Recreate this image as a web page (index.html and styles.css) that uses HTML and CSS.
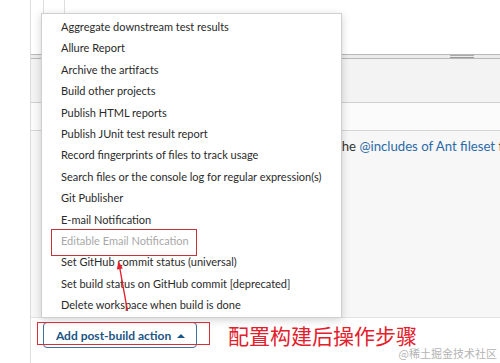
FILE: index.html
```html
<!DOCTYPE html>
<html lang="en">
<head>
    <meta charset="UTF-8">
    <meta name="viewport" content="width=device-width, initial-scale=1.0">
    <title>Post-build Actions</title>
    <link rel="stylesheet" href="styles.css">
</head>
<body>
    <div class="page">
        <div class="top">
            <div class="tab"></div>
        </div>
        <div class="splitter"><span class="handle"></span></div>
        <div class="section-a"></div>
        <div class="section-b"></div>
        <div class="help">
            <p class="help-text">the <a href="#">@includes of Ant fileset</a> for the exact format.</p>
        </div>
        <div class="actions">
            <button class="add-btn">Add post-build action <span class="caret"></span></button>
            <span class="note">配置构建后操作步骤</span>
        </div>
    </div>

    <ul class="menu">
        <li>Aggregate downstream test results</li>
        <li>Allure Report</li>
        <li>Archive the artifacts</li>
        <li>Build other projects</li>
        <li>Publish HTML reports</li>
        <li>Publish JUnit test result report</li>
        <li>Record fingerprints of files to track usage</li>
        <li>Search files or the console log for regular expression(s)</li>
        <li>Git Publisher</li>
        <li>E-mail Notification</li>
        <li class="disabled">Editable Email Notification</li>
        <li>Set GitHub commit status (universal)</li>
        <li>Set build status on GitHub commit [deprecated]</li>
        <li>Delete workspace when build is done</li>
    </ul>

    <!-- annotations drawn on top of the screenshot -->
    <div class="mark mark-item"></div>
    <div class="mark mark-btn"></div>
    <svg class="arrow" width="500" height="363" viewBox="0 0 500 363">
        <line x1="127.5" y1="311" x2="119.6" y2="267" stroke="#e3202c" stroke-width="1.4"/>
        <polygon points="118.5,261 122.8,268.4 116.8,269.4" fill="#e3202c"/>
    </svg>
    <div class="watermark">@稀土掘金技术社区</div>
</body>
</html>
```

FILE: styles.css
```css
body {
    margin: 0;
    height: 363px;
    overflow: hidden;
    background: #fff;
    font-family: Lato, "Open Sans", Arial, sans-serif;
    color: #333;
}
.page {
    margin-left: 30px;
    height: 363px;
    border-left: 1px solid #dcdcdc;
    display: flex;
    flex-direction: column;
}
.top {
    height: 54px;
}
.tab {
    margin-left: 12px;
    width: 20px;
    height: 13px;
    border-left: 1px solid #dedede;
    border-right: 1px solid #dedede;
}
.splitter {
    height: 3px;
    border-top: 1px solid #b8b8b8;
    border-bottom: 1px solid #b8b8b8;
    background: #ececec;
    display: flex;
    justify-content: flex-end;
    padding-right: 26px;
}
.handle {
    width: 24px;
    height: 1px;
    border-bottom: 1px solid #999;
    border-top: 1px solid #aaa;
}
.section-a {
    height: 43px;
    background: #f3f3f3;
    border-bottom: 1px solid #cfcfcf;
}
.section-b {
    height: 27px;
    background: #fbfbfb;
    border-bottom: 1px solid #d4d4d4;
}
.help {
    height: 186px;
    background: #f7f7f7;
    border-bottom: 1px solid #e2e2e2;
    overflow: hidden;
}
.help-text {
    margin: 0;
    padding: 6px 0 0 306px;
    font-size: 13.2px;
    line-height: 18px;
    white-space: nowrap;
    color: #333;
}
.help-text a {
    color: #2b6aa8;
    text-decoration: none;
}
.actions {
    display: flex;
    align-items: center;
    padding: 4px 0 0 12px;
}
.add-btn {
    width: 154px;
    height: 26px;
    border: 1px solid #3f6f97;
    border-radius: 4px;
    background: #fff;
    color: #1b5585;
    font-family: Lato, "Open Sans", Arial, sans-serif;
    font-size: 12px;
    font-weight: bold;
    padding: 0 0 0 1px;
}
.caret {
    display: inline-block;
    margin-left: 3px;
    vertical-align: 2px;
    border-left: 4px solid transparent;
    border-right: 4px solid transparent;
    border-bottom: 4px solid #1b5585;
}
.note {
    margin-left: 31px;
    color: #e3202c;
    font-family: "Noto Sans CJK SC", sans-serif;
    font-size: 21px;
    line-height: 26px;
}
.menu {
    position: absolute;
    left: 41px;
    top: 13px;
    width: 299px;
    margin: 0;
    padding: 2px 0;
    list-style: none;
    background: #fff;
    border: 1px solid #cfcfcf;
    box-shadow: 0 2px 8px rgba(0, 0, 0, 0.18);
    font-size: 11px;
    color: #2a2a2a;
}
.menu li {
    height: 21.4px;
    line-height: 21.4px;
    padding-left: 19px;
    white-space: nowrap;
}
.menu li.disabled {
    color: #a8a8a8;
}
.mark {
    position: absolute;
    border: 1px solid #c2343e;
}
.mark-item {
    left: 51px;
    top: 229px;
    width: 144px;
    height: 25px;
}
.mark-btn {
    left: 37px;
    top: 322px;
    width: 171px;
    height: 21px;
    border-color: #d3303c;
}
.arrow {
    position: absolute;
    left: 0;
    top: 0;
}
.watermark {
    position: absolute;
    right: 3px;
    bottom: 2px;
    font-family: "Noto Sans CJK SC", sans-serif;
    font-size: 11px;
    color: #b4b4b4;
}
```
